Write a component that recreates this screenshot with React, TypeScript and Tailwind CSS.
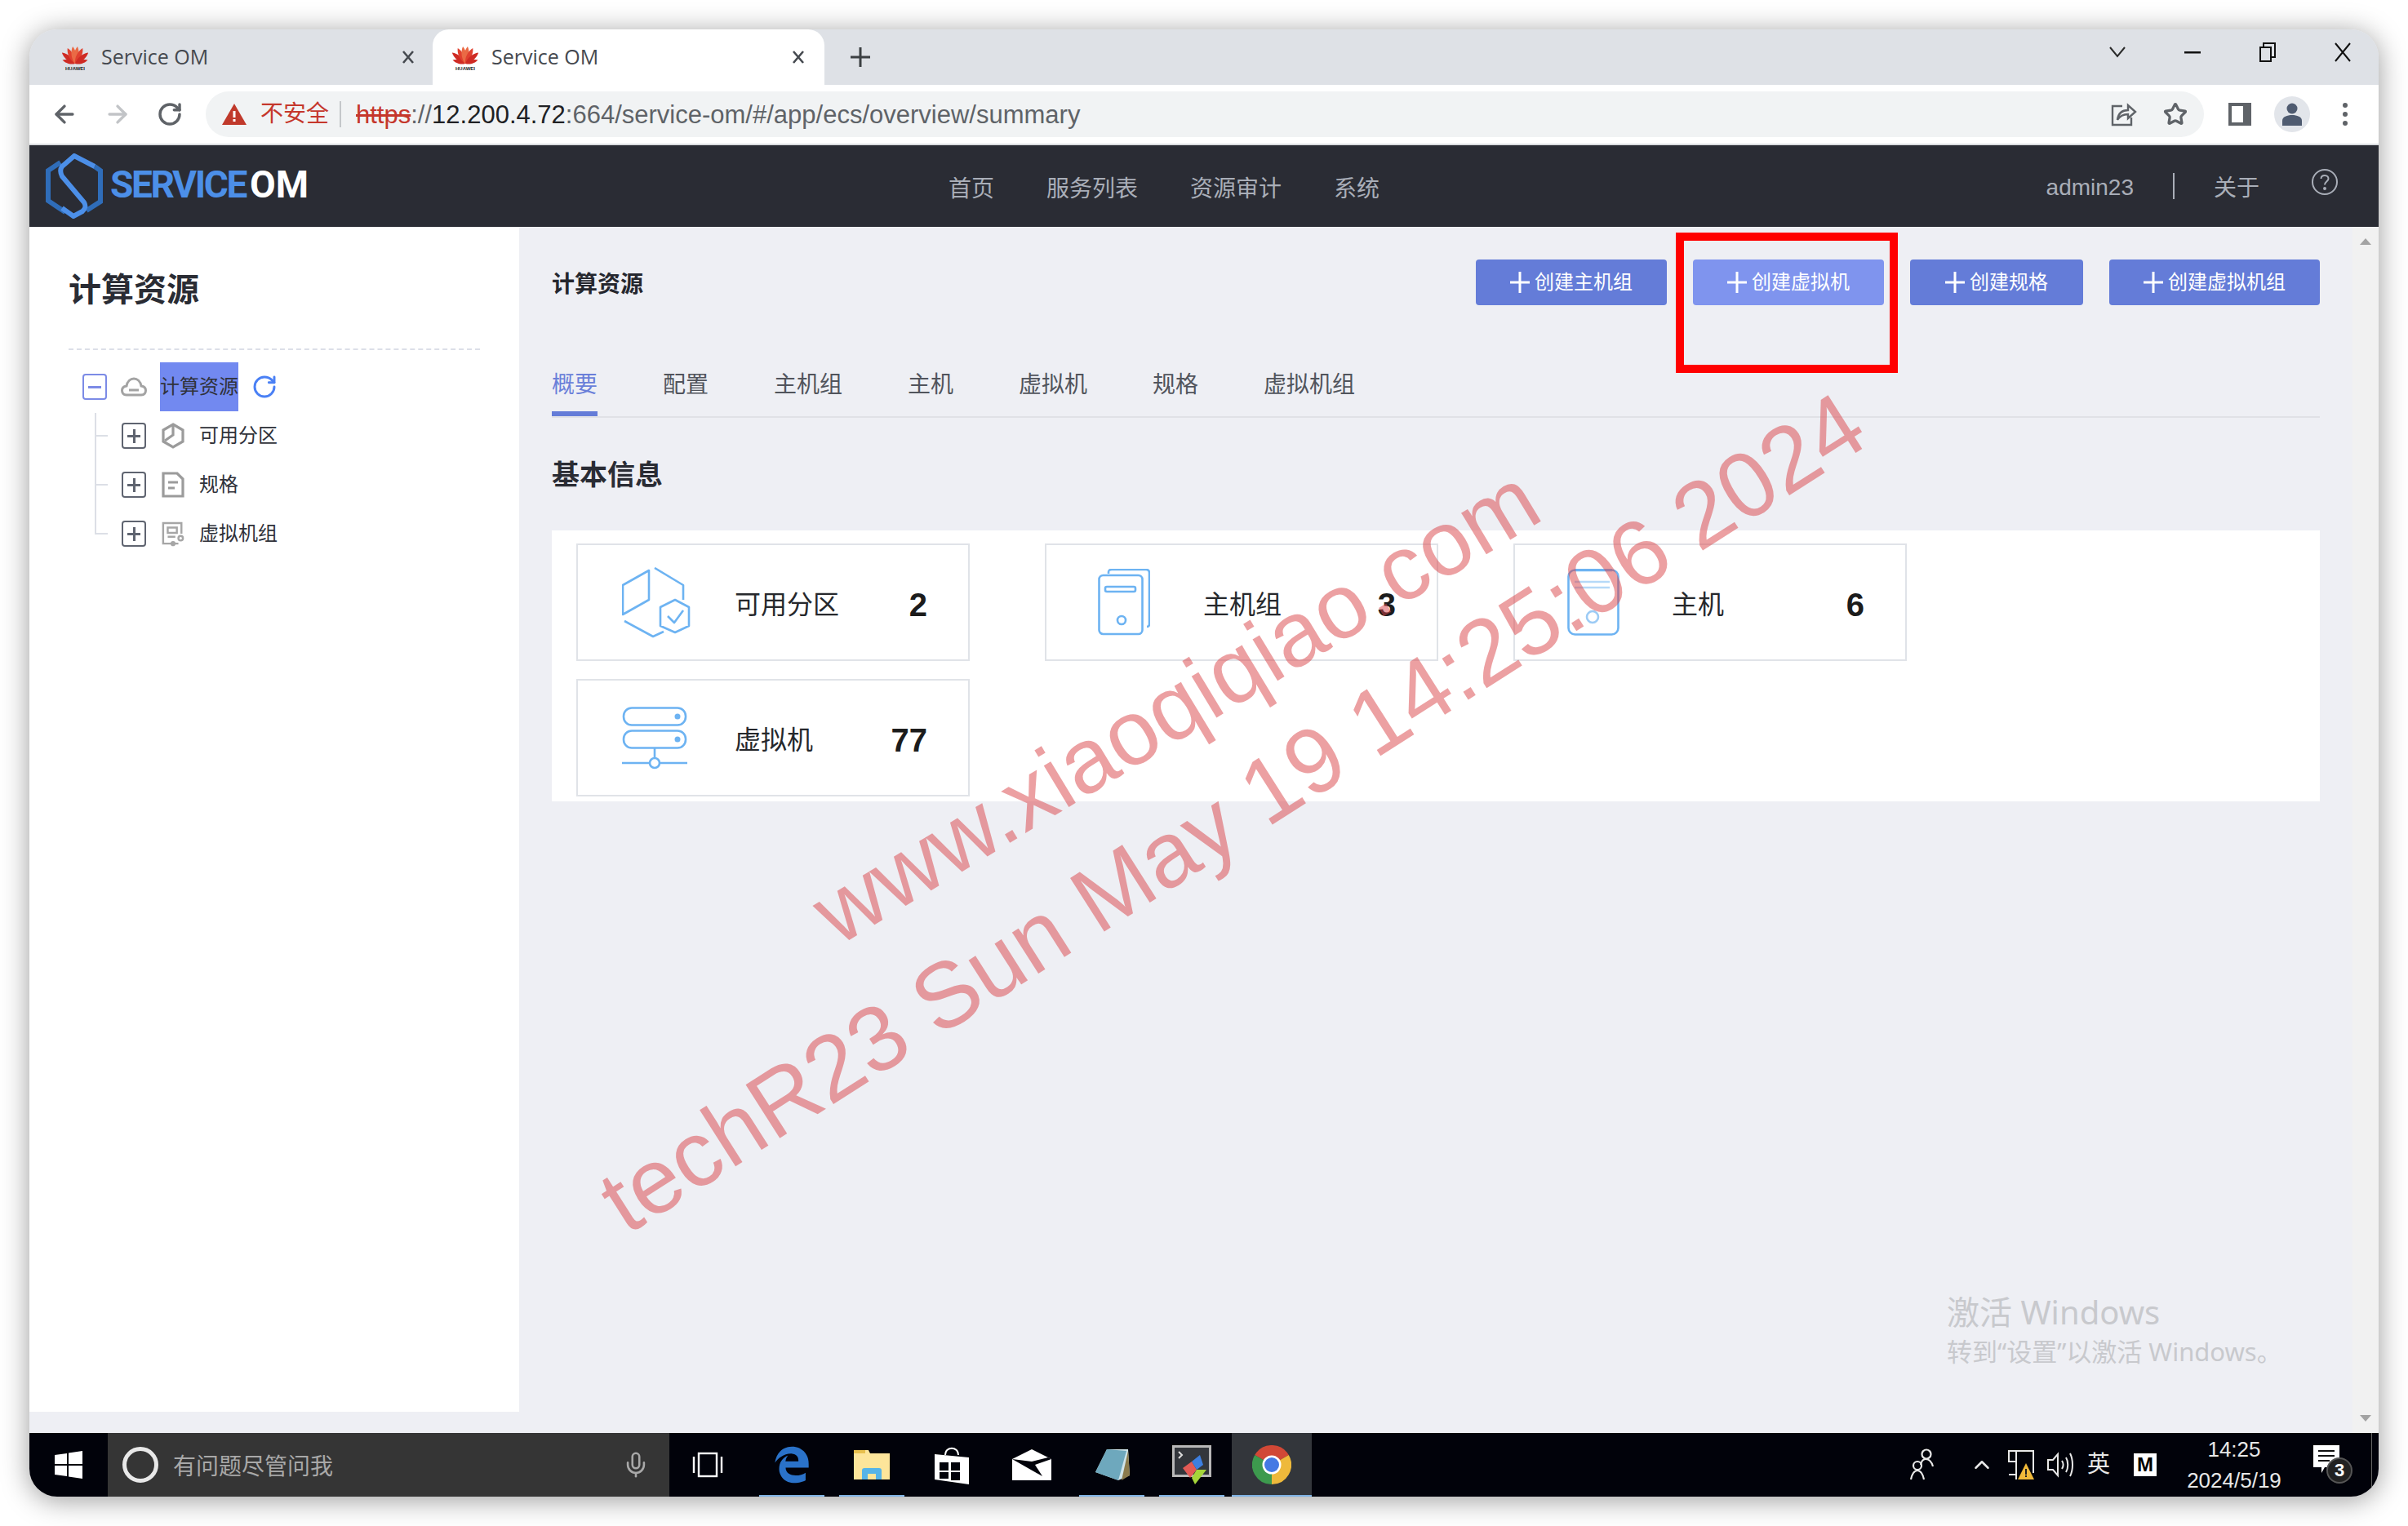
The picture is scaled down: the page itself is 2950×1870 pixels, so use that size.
import React from "react";
import { ArrowLeft, ArrowRight, RotateCw, Star, ChevronUp, Mic } from "lucide-react";
import { FaEdgeLegacy } from "react-icons/fa6";

const Huawei = () => (
  <span className="flex w-[32px] flex-col items-center">
    <svg width="32" height="25" viewBox="0 0 32 25">
      {[-74, -50, -26, -8, 8, 26, 50, 74].map((a, i) => (
        <path
          key={a}
          d="M16 24 C11.5 17 12 7 16 1 C20 7 20.5 17 16 24 Z"
          fill={i === 3 || i === 4 ? "#ea6a45" : i === 2 || i === 5 ? "#e0402f" : "#cf2b24"}
          transform={`rotate(${a} 16 24) translate(16 24) scale(${i === 0 || i === 7 ? 0.7 : 0.92}) translate(-16 -24)`}
        />
      ))}
    </svg>
    <span className="mt-[2px] text-[6px] leading-[6px] font-bold text-[#222]">HUAWEI</span>
  </span>
);

const CloseX = () => (
  <svg width="18" height="18" viewBox="0 0 18 18" stroke="#45494f" strokeWidth="2.6" fill="none">
    <path d="M3 2 L15 16 M15 2 L3 16" />
  </svg>
);

const Logo = () => (
  <div className="flex items-center">
    <svg width="70" height="80" viewBox="0 0 70 80" fill="none" strokeWidth="6" className="shrink-0">
      <path d="M18 11 L3 21 V58 L24 72" stroke="#2f6db9" />
      <path d="M50 70 L67 59 V21 L60 16" stroke="#2f6db9" />
      <path d="M60 16 L35 3 L20 16 C17 20 18 24 20 28 L47 60 C50 65 48 68 45 71 L34 77 L20 67" stroke="#4c8fe8" />
    </svg>
    <span className="mb-[4px] ml-[9px] font-['Roboto',sans-serif] text-[46px] leading-none font-bold tracking-[-2.4px] text-[#4c8fe8]">SERVICE</span>
    <span className="mb-[4px] ml-[5px] font-['Roboto',sans-serif] text-[46px] leading-none font-bold text-white">OM</span>
  </div>
);

const AzIcon = () => (
  <svg width="84" height="87" viewBox="0 0 84 87" fill="none" stroke="#6db3f2" strokeWidth="2.6" strokeLinejoin="round">
    <path d="M1 22 L33 4 V40 L1 58 Z" />
    <path d="M40 1 L75 22 V40" />
    <path d="M3 66 L38 85 L51 79" />
    <path d="M65 40 L82 49 V72 L65 80 L47 72 V49 Z" />
    <path d="M56 60 L64 68 L75 53" />
  </svg>
);

const GroupIcon = () => (
  <svg width="64" height="82" viewBox="0 0 64 82" fill="none" stroke="#6db3f2" strokeWidth="2.6" className="ml-[9px]">
    <rect x="1.5" y="8" width="53" height="72" rx="5" />
    <rect x="9" y="22" width="37" height="6" rx="2" />
    <circle cx="29" cy="63" r="5" />
    <path d="M13 6 V4 Q13 1 17 1 H59 Q63 1 63 5 V68 Q63 71 60 71" />
  </svg>
);

const HostIcon = () => (
  <svg width="64" height="82" viewBox="0 0 64 82" fill="none" stroke="#6db3f2" strokeWidth="2.6" className="ml-[10px]">
    <rect x="1.5" y="1.5" width="61" height="79" rx="8" />
    <path d="M9 1.5 H55" strokeWidth="3.5" />
    <path d="M9 16 H52 M9 23 H52" stroke="#b5d9f8" />
    <circle cx="31" cy="59" r="7" stroke="#9ccbf5" />
  </svg>
);

const VmIcon = () => (
  <svg width="80" height="77" viewBox="0 0 80 77" fill="none" stroke="#6db3f2" strokeWidth="2.6">
    <rect x="2" y="1.5" width="76" height="21" rx="10" />
    <circle cx="68" cy="12" r="3.5" fill="#6db3f2" stroke="none" />
    <rect x="2" y="29.5" width="76" height="21" rx="10" />
    <circle cx="68" cy="40" r="3.5" fill="#6db3f2" stroke="none" />
    <path d="M40 51 V63 M0 69 H34 M46 69 H80" />
    <circle cx="40" cy="69" r="6" />
  </svg>
);

const Card = ({ icon, label, value }: { icon: React.ReactNode; label: string; value: string }) => (
  <div className="flex h-[144px] w-[482px] items-center border-2 border-[#e0e3e8] bg-white">
    <div className="flex w-[192px] shrink-0 items-center pl-[54px]">{icon}</div>
    <span className="mt-[6px] flex-1 text-[32px] leading-none text-[#26282c]">{label}</span>
    <span className="mt-[6px] pr-[50px] font-['Liberation_Sans',sans-serif] text-[40px] leading-none font-bold text-[#1c1c1c]">{value}</span>
  </div>
);

const TreeBox = ({ minus }: { minus?: boolean }) => (
  <span className={`flex h-[32px] w-[30px] shrink-0 items-center justify-center rounded-[4px] border-2 ${minus ? "border-[#7c8be6]" : "border-[#5f6470]"}`}>
    <span className={`relative block h-[3px] w-[16px] ${minus ? "bg-[#7c8be6]" : "bg-[#5f6470]"}`}>
      {!minus && <span className="absolute top-[-7px] left-[6.5px] block h-[17px] w-[3px] bg-[#5f6470]" />}
    </span>
  </span>
);

const TreeRow = ({ icon, label }: { icon: React.ReactNode; label: string }) => (
  <div className="flex h-[60px] items-center pl-[65px]">
    <TreeBox />
    <span className="ml-[19px] flex w-[28px] shrink-0 justify-center">{icon}</span>
    <span className="ml-[18px] text-[24px] leading-none text-[#30323a]">{label}</span>
  </div>
);

const Btn = ({ label, hover, wide, children }: { label: string; hover?: boolean; wide?: boolean; children?: React.ReactNode }) => (
  <div className={`relative flex h-[56px] items-center gap-[6px] rounded-[4px] ${wide ? "px-[43px]" : "px-[42px]"} text-[24px] leading-none text-white ${hover ? "bg-[#7f94ee]" : "bg-[#647cd8]"}`}>
    <svg width="24" height="26" viewBox="0 0 24 26" stroke="#fff" strokeWidth="3" className="shrink-0">
      <path d="M12 0 V26 M0 13 H24" />
    </svg>
    <span>{label}</span>
    {children}
  </div>
);

const TaskCell = ({ on, active, children }: { on?: boolean; active?: boolean; children: React.ReactNode }) => (
  <div className={`relative flex h-full w-[98px] items-center justify-center ${active ? "bg-[#33363b]" : ""}`}>
    {children}
    {on && <span className={`absolute bottom-0 h-[2px] bg-[#7fb2e5] ${active ? "inset-x-0" : "inset-x-[9px]"}`} />}
  </div>
);

export default function App() {
  return (
    <div className="relative h-[1870px] w-[2950px] overflow-hidden bg-white pt-[36px] pl-[36px] font-['Liberation_Sans','Noto_Sans_CJK_SC',sans-serif]">
      <div className="relative flex h-[1798px] w-[2878px] flex-col overflow-hidden rounded-[34px] bg-[#eeeff4] shadow-[0_4px_34px_rgba(0,0,0,0.4)]">
        {/* tab strip */}
        <div className="flex h-[68px] shrink-0 items-center bg-[#dee1e6]">
          <div className="flex h-full w-[494px] items-center pr-[21px] pl-[40px]">
            <Huawei />
            <span className="ml-[16px] flex-1 font-['Open_Sans',sans-serif] text-[25px] text-[#45494f]">Service OM</span>
            <CloseX />
          </div>
          <div className="flex h-full w-[480px] items-center rounded-t-[20px] bg-white pr-[23px] pl-[24px]">
            <Huawei />
            <span className="ml-[16px] flex-1 font-['Open_Sans',sans-serif] text-[25px] text-[#45494f]">Service OM</span>
            <CloseX />
          </div>
          <svg width="24" height="24" viewBox="0 0 24 24" stroke="#3c4043" strokeWidth="3" className="ml-[32px]">
            <path d="M12 0 V24 M0 12 H24" />
          </svg>
          <div className="mb-[12px] ml-auto flex items-center pr-[34px]">
            <svg width="20" height="14" viewBox="0 0 20 14" fill="none" stroke="#2b2b2b" strokeWidth="2"><path d="M1 1 L10 12 L19 1" /></svg>
            <svg width="20" height="4" viewBox="0 0 20 4" className="ml-[72px]"><rect width="20" height="2.5" y="1" fill="#111" /></svg>
            <svg width="20" height="24" viewBox="0 0 20 24" fill="none" stroke="#111" strokeWidth="2" className="ml-[72px]">
              <rect x="1" y="6" width="13" height="17" /><path d="M5 5 V1 H19 V18 H15" />
            </svg>
            <svg width="20" height="24" viewBox="0 0 20 24" fill="none" stroke="#111" strokeWidth="2" className="ml-[72px]">
              <path d="M1 1 L19 23 M19 1 L1 23" />
            </svg>
          </div>
        </div>
        {/* toolbar */}
        <div className="flex h-[74px] shrink-0 items-center border-b-2 border-[#dadce0] bg-white">
          <ArrowLeft size={34} strokeWidth={2.4} className="ml-[26px] text-[#5f6368]" />
          <ArrowRight size={34} strokeWidth={2.4} className="ml-[31px] text-[#c2c4c7]" />
          <RotateCw size={32} strokeWidth={2.6} className="ml-[31px] text-[#5f6368]" />
          <div className="ml-[28px] flex h-[56px] w-[2448px] items-center rounded-full bg-[#f1f3f4] pr-[20px] pl-[20px]">
            <svg width="30" height="26" viewBox="0 0 30 26">
              <path d="M15 0 L30 26 H0 Z" fill="#c0392b" />
              <rect x="13.5" y="9" width="3" height="8" fill="#fff" />
              <rect x="13.5" y="19" width="3" height="3" fill="#fff" />
            </svg>
            <span className="ml-[17px] text-[28px] leading-none text-[#c5372c]">不安全</span>
            <span className="mr-[18px] ml-[13px] h-[32px] w-[2px] bg-[#c4c7ca]" />
            <span className="whitespace-nowrap text-[31px] leading-none text-[#5f6368]">
              <span className="text-[#c5372c] line-through">https</span>://<span className="text-[#202124]">12.200.4.72</span>:664/service-om/#/app/ecs/overview/summary
            </span>
            <div className="ml-auto flex items-center">
              <svg width="32" height="30" viewBox="0 0 32 30" fill="none" stroke="#5f6368" strokeWidth="2.4">
                <path d="M14 5 H2 V28 H25 V19" />
                <path d="M8 22 C9 14 14 10 21 10 V4 L30 12 L21 20 V15 C15 15 11 17 8 22 Z" />
              </svg>
              <Star size={30} strokeWidth={2.6} className="ml-[32px] text-[#5f6368]" />
            </div>
          </div>
          <svg width="28" height="28" viewBox="0 0 28 28" className="ml-[30px]">
            <rect width="28" height="28" fill="#5f6368" /><rect x="4" y="4" width="14" height="20" fill="#fff" />
          </svg>
          <span className="ml-[28px] flex h-[44px] w-[44px] items-center justify-center rounded-full bg-[#e2e5ea]">
            <svg width="26" height="30" viewBox="0 0 26 30" fill="#4f5b70">
              <circle cx="13" cy="8" r="6.5" /><path d="M1 29 V23 C1 18 7 16 13 16 C19 16 25 18 25 23 V29 Z" />
            </svg>
          </span>
          <span className="ml-[40px] flex flex-col gap-[5px]">
            <span className="h-[6px] w-[6px] rounded-full bg-[#5f6368]" />
            <span className="h-[6px] w-[6px] rounded-full bg-[#5f6368]" />
            <span className="h-[6px] w-[6px] rounded-full bg-[#5f6368]" />
          </span>
        </div>
        {/* app header */}
        <div className="flex h-[100px] shrink-0 items-center bg-[#2a2c34] pr-[50px] text-[28px] leading-none text-[#a9aeb8]">
          <div className="w-[1126px] shrink-0 pl-[20px]">
            <Logo />
          </div>
          <div className="mt-[8px] flex gap-[64px]">
            <span>首页</span>
            <span>服务列表</span>
            <span>资源审计</span>
            <span>系统</span>
          </div>
          <span className="mt-[4px] ml-auto">admin23</span>
          <span className="mx-[48px] h-[32px] w-[2px] bg-[#a9aeb8]" />
          <span className="mt-[6px]">关于</span>
          <svg width="32" height="32" viewBox="0 0 32 32" fill="none" stroke="#a9aeb8" strokeWidth="2" className="mb-[10px] ml-[64px]">
            <circle cx="16" cy="16" r="15" />
            <path d="M11.5 12 C11.5 9 13.5 8 16 8 C19 8 20.5 10 20.5 12 C20.5 15 16 15.5 16 19.5" />
            <circle cx="16" cy="24" r="1" fill="#a9aeb8" />
          </svg>
        </div>
        {/* body */}
        <div className="flex min-h-0 flex-1">
          <aside className="mb-[26px] w-[600px] shrink-0 bg-white pt-[49px] pl-[48px]">
            <h1 className="text-[40px] leading-[56px] font-bold text-[#2a2c34]">计算资源</h1>
            <div className="mt-[44px] w-[504px] border-b-2 border-dashed border-[#dcdfe8]" />
            <div className="mt-[15px]">
              <div className="flex h-[60px] items-center pl-[17px]">
                <TreeBox minus />
                <svg width="32" height="24" viewBox="0 0 32 24" fill="none" stroke="#a3a3a3" strokeWidth="3" className="ml-[17px]">
                  <path d="M7 22 C3 22 1.5 19 1.5 16.5 C1.5 13.5 4 11.5 7 11 C8 5 12 2 16 2 C20 2 24 5 25 11 C28 11.5 30.5 13.5 30.5 16.5 C30.5 19 29 22 25 22 Z" />
                  <path d="M10 16 H22" />
                </svg>
                <span className="ml-[16px] flex h-[60px] items-center bg-[#7289f0] text-[24px] leading-none text-[#30323a]">计算资源</span>
                <RotateCw size={32} strokeWidth={2.2} className="ml-[16px] text-[#4a80f5]" />
              </div>
              <div className="relative">
                <span className="absolute top-[2px] left-[32px] h-[148px] w-[2px] bg-[#dcdfe6]" />
                <span className="absolute top-[29px] left-[32px] h-[2px] w-[16px] bg-[#dcdfe6]" />
                <span className="absolute top-[89px] left-[32px] h-[2px] w-[16px] bg-[#dcdfe6]" />
                <span className="absolute top-[149px] left-[32px] h-[2px] w-[16px] bg-[#dcdfe6]" />
                <TreeRow
                  label="可用分区"
                  icon={
                    <svg width="28" height="32" viewBox="0 0 28 32" fill="none" stroke="#9b9b9b" strokeWidth="3.2">
                      <path d="M14 2 L26 9 V23 L14 30 L2 23 V9 Z" /><path d="M14 3 V15 L4 22" />
                    </svg>
                  }
                />
                <TreeRow
                  label="规格"
                  icon={
                    <svg width="28" height="32" viewBox="0 0 28 32" fill="none" stroke="#9b9b9b" strokeWidth="3.2">
                      <path d="M2 2 H19 L26 9 V30 H2 Z" /><path d="M8 13 H20 M8 20 H16" />
                    </svg>
                  }
                />
                <TreeRow
                  label="虚拟机组"
                  icon={
                    <svg width="30" height="32" viewBox="0 0 30 32" fill="none" stroke="#a6a6a6" strokeWidth="2.6">
                      <path d="M22 29 H2 V2 H26 V16" /><path d="M8 8 H20 V15 H8 Z M8 20 H18" /><circle cx="25" cy="22" r="3" /><circle cx="15" cy="29" r="2" />
                    </svg>
                  }
                />
              </div>
            </div>
          </aside>
          <main className="min-w-0 flex-1 pt-[40px] pr-[40px] pl-[40px]">
            <div className="flex items-center justify-between">
              <span className="mt-[6px] text-[28px] leading-none font-bold text-[#25272e]">计算资源</span>
              <div className="flex gap-[32px]">
                <Btn label="创建主机组" />
                <Btn label="创建虚拟机" hover>
                  <span className="absolute top-[-33px] left-[-21px] h-[172px] w-[272px] border-10 border-[#ff0000]" />
                </Btn>
                <Btn label="创建规格" wide />
                <Btn label="创建虚拟机组" />
              </div>
            </div>
            <div className="mt-[76px] flex gap-[80px] border-b-2 border-[#e0e1e6] text-[28px] leading-[40px] text-[#51545c]">
              <span className="border-b-[6px] border-[#647cd8] pt-[2px] pb-[12px] text-[#6a7fd9]">概要</span>
              <span className="pt-[2px] pb-[18px]">配置</span>
              <span className="pt-[2px] pb-[18px]">主机组</span>
              <span className="pt-[2px] pb-[18px]">主机</span>
              <span className="pt-[2px] pb-[18px]">虚拟机</span>
              <span className="pt-[2px] pb-[18px]">规格</span>
              <span className="pt-[2px] pb-[18px]">虚拟机组</span>
            </div>
            <h2 className="mt-[48px] text-[34px] leading-[44px] font-bold text-[#2a2c34]">基本信息</h2>
            <div className="mt-[46px] bg-white pt-[16px] pb-[6px] pl-[30px]">
              <div className="grid grid-cols-[482px_482px_482px] gap-x-[92px] gap-y-[22px]">
                <Card icon={<AzIcon />} label="可用分区" value="2" />
                <Card icon={<GroupIcon />} label="主机组" value="3" />
                <Card icon={<HostIcon />} label="主机" value="6" />
                <Card icon={<VmIcon />} label="虚拟机" value="77" />
              </div>
            </div>
          </main>
          <div className="flex w-[32px] shrink-0 flex-col items-center justify-between bg-[#f1f1f1] py-[14px]">
            <svg width="14" height="8" viewBox="0 0 14 8"><path d="M7 0 L14 8 H0 Z" fill="#a3a3a3" /></svg>
            <svg width="14" height="8" viewBox="0 0 14 8"><path d="M7 8 L14 0 H0 Z" fill="#a3a3a3" /></svg>
          </div>
        </div>
        {/* taskbar */}
        <div className="relative flex h-[78px] shrink-0 items-center bg-[#01020a]">
          <div className="flex h-full w-[96px] items-center justify-center">
            <svg width="34" height="34" viewBox="0 0 34 34" fill="#fff">
              <path d="M0 5 L15 3 V16 H0 Z M17 2.5 L34 0 V16 H17 Z M0 18 H15 V31 L0 29 Z M17 18 H34 V34 L17 31.5 Z" />
            </svg>
          </div>
          <div className="flex h-full w-[688px] items-center bg-[#353535] pr-[24px] pl-[18px]">
            <span className="h-[44px] w-[44px] rounded-full border-[5px] border-[#e8e8e8]" />
            <span className="mt-[6px] ml-[18px] text-[28px] leading-none text-[#a8a8a8]">有问题尽管问我</span>
            <Mic size={34} strokeWidth={1.8} className="ml-auto text-[#a8a8a8]" />
          </div>
          <div className="flex h-full w-[101px] items-center justify-center pr-[8px]">
            <svg width="40" height="32" viewBox="0 0 40 32" fill="none" stroke="#fff" strokeWidth="2.4">
              <rect x="9" y="2" width="22" height="28" /><path d="M3 6 V26 M37 6 V26" />
            </svg>
          </div>
          <TaskCell on>
            <FaEdgeLegacy size={46} className="text-[#2a72c9]" />
          </TaskCell>
          <TaskCell on>
            <svg width="44" height="36" viewBox="0 0 44 36">
              <path d="M0 0 H18 L20 4 H44 V36 H0 Z" fill="#fde59a" />
              <path d="M0 0 H14 V4 H0 Z" fill="#e8c04e" />
              <path d="M10 36 V25 Q10 22 13 22 H31 Q34 22 34 25 V36 H27 V29 H17 V36 Z" fill="#56b4e8" />
            </svg>
          </TaskCell>
          <TaskCell>
            <svg width="42" height="48" viewBox="0 0 42 48">
              <path d="M13 12 C13 1 29 1 29 12" fill="none" stroke="#fff" strokeWidth="2" />
              <path d="M0 11 L42 15 V48 L0 42 Z" fill="#fff" />
              <path d="M6 21 H17 V31 H6 Z M20 21 H31 V31 H20 Z M6 33 H17 V41 H6 Z M20 33 H31 V43 H20 Z" fill="#01020a" />
            </svg>
          </TaskCell>
          <TaskCell>
            <svg width="48" height="38" viewBox="0 0 48 38">
              <path d="M0 12 L24 0 L48 12 V38 H0 Z" fill="#fff" />
              <path d="M0 12 L37 33 L28 19 L48 12 L44 10 L24 15 Z" fill="#01020a" />
            </svg>
          </TaskCell>
          <TaskCell on>
            <svg width="44" height="42" viewBox="0 0 44 42">
              <path d="M16 2 H42 L44 34 L30 40 L2 30 Z" fill="#cfe4ea" />
              <path d="M16 2 L2 30 L30 40 L40 4 Z" fill="#6ea8bd" />
              <path d="M42 4 L44 34 L34 40 Z" fill="#8b7b4d" />
            </svg>
          </TaskCell>
          <TaskCell on>
            <svg width="48" height="48" viewBox="0 0 48 48">
              <rect x="1.5" y="1.5" width="45" height="36" fill="#33363b" stroke="#b8b8b8" strokeWidth="3" />
              <path d="M8 8 L12 12 L8 16" stroke="#ddd" strokeWidth="2" fill="none" />
              <path d="M13 28 L24 20 L30 30 L22 40 Z" fill="#e25a55" />
              <path d="M24 20 L34 12 L38 24 L30 30 Z" fill="#3d7fe0" />
              <path d="M24 40 L30 30 L42 30 L28 48 Z" fill="#a5d63a" />
            </svg>
          </TaskCell>
          <TaskCell on active>
            <svg width="48" height="48" viewBox="0 0 48 48">
              <path d="M24 24 L3.2 12 A24 24 0 0 1 44.8 12 Z" fill="#d14836" />
              <path d="M24 24 L3.2 12 A24 24 0 0 0 24 48 Z" fill="#3d9a4e" />
              <path d="M24 24 L24 48 A24 24 0 0 0 44.8 12 Z" fill="#eeb93b" />
              <circle cx="24" cy="24" r="11.5" fill="#fff" />
              <circle cx="24" cy="24" r="9" fill="#4479e4" />
            </svg>
          </TaskCell>
          <div className="ml-auto flex items-center pr-[32px] text-white">
            <svg width="30" height="40" viewBox="0 0 30 40" fill="none" stroke="#e8e8e8" strokeWidth="2.2">
              <circle cx="20" cy="7" r="5.5" /><path d="M13 20 C14 15 16 13 19 13 C23 13 26 15 28 22" />
              <circle cx="9" cy="21" r="5" /><path d="M1 38 C2 32 5 27 9 27 C13 27 16 32 17 38" />
            </svg>
            <ChevronUp size={30} strokeWidth={2} className="ml-[43px] text-[#e8e8e8]" />
            <svg width="32" height="36" viewBox="0 0 32 36" fill="none" className="ml-[17px]">
              <path d="M10 1 H31 V28 M10 1 V30 H1 M10 30 V36" stroke="#e8e8e8" strokeWidth="2" />
              <rect x="1" y="1" width="9" height="13" fill="#01020a" stroke="#e8e8e8" strokeWidth="2" />
              <path d="M22 16 L32 36 H12 Z" fill="#f0b93a" />
              <rect x="21" y="23" width="2" height="7" fill="#222" /><rect x="21" y="31" width="2" height="2" fill="#222" />
            </svg>
            <svg width="33" height="36" viewBox="0 0 33 36" fill="none" stroke="#e8e8e8" strokeWidth="2" className="ml-[16px]">
              <path d="M1 12 H7 L13 5 V31 L7 24 H1 Z" /><path d="M18 13 C20 16 20 20 18 23" /><path d="M23 9 C26 14 26 22 23 27" /><path d="M28 4 C32 12 32 24 28 32" />
            </svg>
            <span className="ml-[16px] text-[28px] leading-none text-[#e8e8e8]">英</span>
            <span className="ml-[29px] flex h-[28px] w-[28px] items-center justify-center bg-white text-[24px] leading-none font-bold text-black">M</span>
            <div className="ml-[35px] flex w-[120px] flex-col items-center text-[26px] leading-[38px] text-[#e8e8e8]">
              <span>14:25</span>
              <span>2024/5/19</span>
            </div>
            <div className="relative ml-[37px] h-[48px] w-[48px]">
              <svg width="32" height="34" viewBox="0 0 32 34">
                <path d="M0 0 H32 V27 H14 L10 34 V27 H0 Z" fill="#fff" />
                <path d="M6 7 H26 M6 13 H26 M6 19 H20" stroke="#111" strokeWidth="2" />
              </svg>
              <span className="absolute top-[15px] left-[16px] flex h-[32px] w-[32px] items-center justify-center rounded-full border-2 border-[#555] bg-[#222] text-[22px] leading-none font-bold text-white">3</span>
            </div>
          </div>
          <span className="absolute top-0 right-[8px] h-[70px] w-px bg-[#666]" />
        </div>

        {/* activation notice */}
        <div className="absolute top-[1550px] left-[2349px] text-[#c8c9cd]">
          <div className="font-['Noto_Sans','Noto_Sans_CJK_SC',sans-serif] text-[40px] leading-[44px] whitespace-nowrap">激活 Windows</div>
          <div className="mt-[4px] font-['Noto_Sans','Noto_Sans_CJK_SC',sans-serif] text-[31px] leading-[44px] whitespace-nowrap">转到“设置”以激活 Windows。</div>
        </div>

        {/* watermark */}
        <div className="pointer-events-none absolute top-[1029px] left-[999px] origin-[0_100%] -rotate-[31.2deg] text-[112px] leading-[110px] whitespace-nowrap text-[#d94145]/50">www.xiaoqiqiao.com</div>
        <div className="pointer-events-none absolute top-[1382px] left-[740px] origin-[0_100%] -rotate-[32.5deg] text-[113px] leading-[110px] whitespace-nowrap text-[#d94145]/50">techR23 Sun May 19 14:25:06 2024</div>
      </div>
    </div>
  );
}
